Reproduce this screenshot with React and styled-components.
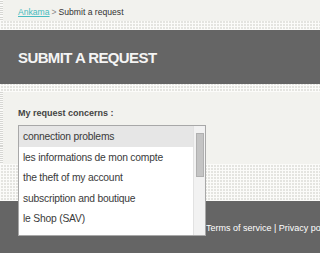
import styled, { createGlobalStyle } from "styled-components";

const options = [
  "connection problems",
  "les informations de mon compte",
  "the theft of my account",
  "subscription and boutique",
  "le Shop (SAV)",
  "game and technical problems",
];

function App() {
  return (
    <>
      <GlobalStyle />
      <Page>
        <Crumbs>
          <CrumbLink href="#">Ankama</CrumbLink>
          <Sep>&gt;</Sep>
          Submit a request
        </Crumbs>
        <Dotted $h={9} />
        <TitleBar>
          <Title>SUBMIT A REQUEST</Title>
        </TitleBar>
        <Dotted $h={8} />
        <Content>
          <Label>My request concerns :</Label>
          <SelectSlot>
            <ListBox>
              <Options>
                {options.map((o, i) => (
                  <Option key={o} $active={i === 0}>
                    {o}
                  </Option>
                ))}
              </Options>
              <ScrollTrack>
                <Thumb />
              </ScrollTrack>
            </ListBox>
          </SelectSlot>
        </Content>
        <Dotted $h={37} />
        <Footer>
          <FooterLinks>Terms of service | Privacy policy</FooterLinks>
        </Footer>
      </Page>
    </>
  );
}

export default App;

const GlobalStyle = createGlobalStyle`
  html, body {
    margin: 0;
    padding: 0;
    background: #666666;
  }
  body {
    font-family: "Liberation Sans", Arial, sans-serif;
    overflow: hidden;
  }
`;

const dots = `
  background-color: #e4e4e0;
  background-image:
    repeating-linear-gradient(90deg, #fbfbf9 0 1px, transparent 1px 3px),
    repeating-linear-gradient(0deg, #fbfbf9 0 1px, transparent 1px 3px);
`;

const leftStrip = `
  border-left: 3px solid transparent;
  border-image: repeating-linear-gradient(0deg, #d6d6d2 0 1px, #fbfbf9 1px 2px) 1;
`;

const Page = styled.div`
  width: 320px;
  height: 253px;
  display: flex;
  flex-direction: column;
  background: #f2f2ee;
  overflow: hidden;
`;

const Crumbs = styled.div`
  height: 21px;
  box-sizing: border-box;
  display: flex;
  align-items: center;
  padding: 2px 0 0 15px;
  font-size: 8.6px;
  color: #333;
  ${leftStrip}
`;

const CrumbLink = styled.a`
  color: #47bcc0;
  text-decoration: underline;
`;

const Sep = styled.span`
  color: #888;
  margin: 0 2px;
`;

const Dotted = styled.div`
  height: ${(p) => p.$h}px;
  flex-shrink: 0;
  ${dots}
`;

const TitleBar = styled.div`
  height: 54px;
  flex-shrink: 0;
  background: #656565;
  display: flex;
  align-items: center;
  padding-left: 18px;
`;

const Title = styled.h1`
  margin: 0;
  font-family: "Liberation Sans", Arial, sans-serif;
  font-weight: bold;
  font-size: 15px;
  letter-spacing: -0.6px;
  color: #f4f4f4;
`;

const Content = styled.div`
  height: 72px;
  flex-shrink: 0;
  box-sizing: border-box;
  padding: 16px 0 0 15px;
  ${leftStrip}
`;

const Label = styled.div`
  font-size: 9px;
  font-weight: bold;
  color: #444;
  height: 17px;
`;

const SelectSlot = styled.div`
  position: relative;
`;

const ListBox = styled.div`
  position: absolute;
  left: 0;
  top: 0;
  width: 188px;
  height: 111px;
  box-sizing: border-box;
  background: #fff;
  border: 1px solid #a8a8a8;
  display: flex;
  z-index: 2;
`;

const Options = styled.ul`
  list-style: none;
  margin: 0;
  padding: 0;
  flex: 1;
  overflow: hidden;
`;

const Option = styled.li`
  height: 20.5px;
  line-height: 21.5px;
  padding-left: 4px;
  font-size: 10.3px;
  letter-spacing: -0.2px;
  color: #3a3a3a;
  white-space: nowrap;
  background: ${(p) => (p.$active ? "#e6e6e6" : "transparent")};
`;

const ScrollTrack = styled.div`
  width: 12px;
  background: #f2f2f2;
  border-left: 1px solid #e2e2e2;
  padding: 7px 1px 0 2px;
  box-sizing: border-box;
`;

const Thumb = styled.div`
  height: 44px;
  background: #c4c4c4;
  border: 1px solid #b0b0b0;
  box-sizing: border-box;
`;

const Footer = styled.div`
  flex: 1;
  background: #656565;
  padding: 22px 0 0 206px;
`;

const FooterLinks = styled.div`
  font-size: 9px;
  color: #fff;
  white-space: nowrap;
`;
